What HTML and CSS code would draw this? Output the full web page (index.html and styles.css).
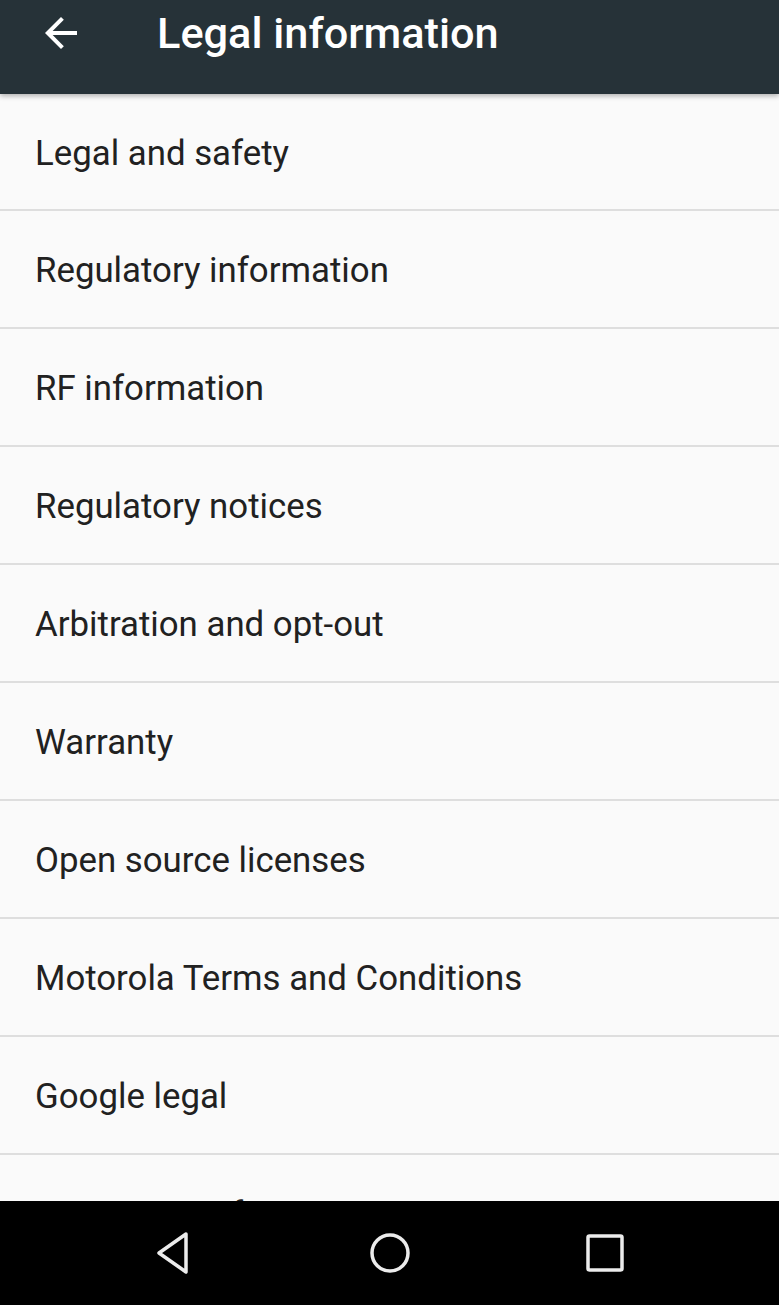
FILE: index.html
```html
<!DOCTYPE html>
<html lang="en">

<head>
    <title>Legal information</title>
    <meta charset="UTF-8">
    <meta name="viewport" content="width=device-width, initial-scale=1">
    <link rel="stylesheet" href="styles.css">
</head>

<body>
    <header class="toolbar">
        <button type="button" class="back" title="Back">
            <svg viewBox="0 0 24 24" width="48" height="48">
                <path d="M20 11H7.83l5.59-5.59L12 4l-8 8 8 8 1.41-1.41L7.83 13H20v-2z" fill="#fff"/>
            </svg>
        </button>
        <h1>Legal information</h1>
    </header>
    <main>
        <ul class="prefs">
            <li>Legal and safety</li>
            <li>Regulatory information</li>
            <li>RF information</li>
            <li>Regulatory notices</li>
            <li>Arbitration and opt-out</li>
            <li>Warranty</li>
            <li>Open source licenses</li>
            <li>Motorola Terms and Conditions</li>
            <li>Google legal</li>
            <li>Consumer information</li>
        </ul>
    </main>
    <nav class="navbar">
        <svg viewBox="0 0 48 48" width="48" height="48">
            <path d="M36 5 L9 24 L36 43 Z" fill="none" stroke="#ececec" stroke-width="3.5" stroke-linejoin="round"/>
        </svg>
        <svg viewBox="0 0 48 48" width="48" height="48">
            <circle cx="24" cy="24" r="18" fill="none" stroke="#ececec" stroke-width="3.5"/>
        </svg>
        <svg viewBox="0 0 48 48" width="48" height="48">
            <rect x="7" y="7" width="34" height="34" rx="1.5" fill="none" stroke="#ececec" stroke-width="3.5"/>
        </svg>
    </nav>
</body>

</html>
```

FILE: styles.css
```css
html {
    height: 100%;
}

body {
    margin: 0;
    height: 100%;
    display: flex;
    flex-direction: column;
    background-color: #fafafa;
    color: #212121;
    font-family: Roboto, "Noto Sans", sans-serif;
    overflow: hidden;
}

.toolbar {
    flex: 0 0 94px;
    display: flex;
    align-items: center;
    background-color: #263238;
    color: #fff;
    box-shadow: 0 2px 5px rgba(0, 0, 0, .3);
    position: relative;
    z-index: 1;
}

.back {
    background: none;
    border: none;
    padding: 0;
    margin: 9px 0 0 37px;
    width: 48px;
    height: 48px;
    align-self: flex-start;
}

.back svg {
    display: block;
}

h1 {
    margin: 0 0 0 72px;
    font-size: 43.3px;
    font-weight: 500;
    align-self: flex-start;
    line-height: 68px;
}

main {
    flex: 1;
    overflow: hidden;
}

.prefs {
    list-style: none;
    margin: 0;
    padding: 0;
}

.prefs li {
    height: 113px;
    line-height: 113px;
    padding: 3px 36px 0 35px;
    font-size: 34.8px;
    border-bottom: 2px solid #dedede;
    white-space: nowrap;
}

.prefs li:first-child {
    height: 112px;
}

.navbar {
    flex: 0 0 104px;
    display: flex;
    justify-content: space-between;
    align-items: center;
    padding: 0 150px;
    background-color: #000;
}

.navbar svg {
    display: block;
}
```
